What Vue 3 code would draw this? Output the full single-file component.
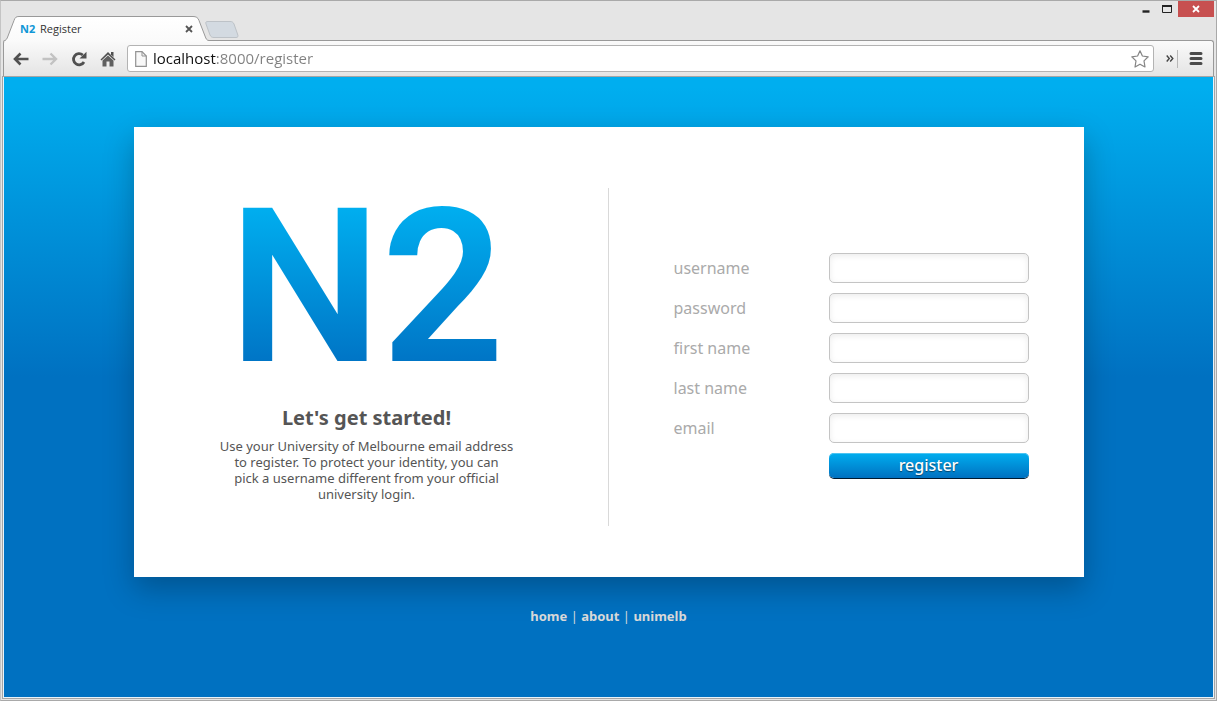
<script setup>
import { ref, reactive } from 'vue'

const address = ref('localhost:8000/register')
const fields = [
  { id: 'username', label: 'username', type: 'text' },
  { id: 'password', label: 'password', type: 'password' },
  { id: 'first-name', label: 'first name', type: 'text' },
  { id: 'last-name', label: 'last name', type: 'text' },
  { id: 'email', label: 'email', type: 'email' }
]
const values = reactive({})
</script>

<template>
  <div class="window">
    <header class="tabstrip">
      <div class="tab">
        <svg class="tab-shape" width="206" height="26" viewBox="0 0 206 26" aria-hidden="true">
          <defs>
            <linearGradient id="tabFill" x1="0" y1="0" x2="0" y2="1">
              <stop offset="0" stop-color="#ffffff" />
              <stop offset="1" stop-color="#fafafa" />
            </linearGradient>
          </defs>
          <path d="M0 26V25.500C3 24.500 4 23 5 20L11 4.500C12 1.500 13 .5 16 .5H190C193 .5 195 1.500 196 4.500L202 20C203 23 204 24.500 206 24.500V26Z" fill="url(#tabFill)" />
          <path d="M0 25.500C3 24.500 4 23 5 20L11 4.500C12 1.500 13 .5 16 .5H190C193 .5 195 1.500 196 4.500L202 20C203 23 204 24.500 206 24.500" fill="none" stroke="#999" />
        </svg>
        <span class="favicon">N2</span>
        <span class="tab-title">Register</span>
        <button class="tab-close" aria-label="Close tab">
          <svg width="8" height="8" viewBox="0 0 8 8"><path d="M1 1L7 7M7 1L1 7" stroke="#555" stroke-width="1.800" /></svg>
        </button>
      </div>
      <button class="new-tab" aria-label="New tab">
        <svg width="34" height="18" viewBox="0 0 34 18"><path d="M3 .5H25C27 .5 28 1 29 3L32.500 13C33.500 15.500 33 16.500 31 16.500H9C7 16.500 6 16 5 14L1 3C.3 1 1 .5 3 .5Z" fill="#d3dae1" stroke="#bdc2c7" /></svg>
      </button>
      <div class="window-buttons">
        <button class="win" aria-label="Minimise"><svg width="8" height="7" viewBox="0 0 8 7"><path d="M.5 5.500H7.500" stroke="#222" stroke-width="2.400" /></svg></button>
        <button class="win" aria-label="Maximise"><svg width="10" height="8" viewBox="0 0 10 8"><path d="M.5 1V7.500H9.500V1" fill="none" stroke="#222" /><path d="M0 1H10" stroke="#222" stroke-width="2" /></svg></button>
        <button class="win win-close" aria-label="Close"><svg width="8" height="8" viewBox="0 0 8 8"><path d="M1 1L7 7M7 1L1 7" stroke="#fff" stroke-width="1.800" /></svg></button>
      </div>
    </header>

    <nav class="toolbar" aria-label="Browser toolbar">
      <button class="tool" aria-label="Back">
        <svg width="16" height="14" viewBox="0 0 16 14"><path d="M15.500 7H2.500M7.500 1.500L2 7L7.500 12.500" fill="none" stroke="#505050" stroke-width="2.600" /></svg>
      </button>
      <button class="tool" aria-label="Forward">
        <svg width="16" height="14" viewBox="0 0 16 14"><path d="M.5 7H13.500M8.500 1.500L14 7L8.500 12.500" fill="none" stroke="#c2c2c2" stroke-width="2.400" /></svg>
      </button>
      <button class="tool" aria-label="Reload">
        <svg width="16" height="16" viewBox="0 0 16 16"><path d="M13 11A5.600 5.600 0 1 1 11.800 4" fill="none" stroke="#505050" stroke-width="2.800" /><path d="M15.500 .8V7.500H8.500Z" fill="#505050" /></svg>
      </button>
      <button class="tool" aria-label="Home">
        <svg width="16" height="16" viewBox="0 0 16 16"><path d="M8 1L15.500 8.500L14.500 9.500L8 3.500L1.500 9.500L.5 8.500Z" fill="#505050" /><path d="M11 1H13.500V6L11 3.500Z" fill="#505050" /><path d="M8 4.500L13.500 9.500V15.500H9.500V10.500H6.500V15.500H2.500V9.500Z" fill="#606060" /></svg>
      </button>
      <div class="omnibox">
        <svg width="12" height="16" viewBox="0 0 12 16" aria-hidden="true"><path d="M.7 .7H7L11.300 5V15.300H.7Z" fill="#f8f8f8" stroke="#929292" stroke-width="1.200" /><path d="M7 .7V5H11.300" fill="none" stroke="#929292" /></svg>
        <input v-model="address" class="address" type="text" aria-label="Address" />
        <button class="star" aria-label="Bookmark this page">
          <svg width="18" height="18" viewBox="0 0 18 18"><path d="M9 .8L11.400 6L17.200 6.800L13 10.900L14 17L9 14.200L4 17L5 10.900L.8 6.800L6.600 6Z" fill="#fff" stroke="#858585" stroke-width="1.200" stroke-linejoin="round" /></svg>
        </button>
      </div>
      <button class="more" aria-label="More extensions">
        <svg width="8" height="7" viewBox="0 0 8 7"><path d="M.7 .5L3.300 3.500L.7 6.500M4.200 .5L6.800 3.500L4.200 6.500" fill="none" stroke="#444" stroke-width="1.400" /></svg>
      </button>
      <button class="menu" aria-label="Menu">
        <svg width="14" height="13" viewBox="0 0 14 13"><path d="M2 1.500H12M2 6.500H12M2 11.500H12" stroke="#4b4b4b" stroke-width="3" stroke-linecap="round" /></svg>
      </button>
    </nav>

    <div class="page">
      <main class="card">
        <section class="intro">
          <h1 class="logo">N2</h1>
          <h2>Let's get started!</h2>
          <p>Use your University of Melbourne email address to register. To protect your identity, you can pick&nbsp;a username different from your official university login.</p>
        </section>
        <form class="form" @submit.prevent>
          <div v-for="f in fields" :key="f.id" class="row">
            <label :for="f.id">{{ f.label }}</label>
            <input :id="f.id" v-model="values[f.id]" :type="f.type" />
          </div>
          <button class="register" type="submit">register</button>
        </form>
      </main>
      <footer class="links">
        <a href="#home">home</a> | <a href="#about">about</a> | <a href="#unimelb">unimelb</a>
      </footer>
    </div>
  </div>
</template>

<style>
body {
  margin: 0;
}
</style>

<style scoped>
* {
  box-sizing: border-box;
}

button {
  margin: 0;
  padding: 0;
  border: 0;
  background: none;
  display: flex;
  align-items: center;
  justify-content: center;
}

.window {
  min-height: 100vh;
  display: flex;
  flex-direction: column;
  padding: 0 2px 2px;
  background: #e5e5e5;
  border: 1px solid #a9a9a9;
  border-left-color: #c4c4c4;
  font-family: "Open Sans", "Noto Sans", sans-serif;
}

.tabstrip {
  display: flex;
  height: 39px;
}

.tab {
  position: relative;
  display: flex;
  align-items: center;
  width: 206px;
  height: 26px;
  margin-top: 15px;
  padding: 0 14px 0 17px;
  z-index: 1;
}

.tab-shape {
  position: absolute;
  left: 0;
  top: 0;
}

.favicon,
.tab-title,
.tab-close {
  position: relative;
}

.favicon {
  width: 20px;
  font: 700 11px/16px "Noto Sans", sans-serif;
  color: #1197d6;
}

.tab-title {
  flex: 1;
  font-size: 11px;
  line-height: 16px;
  color: #333;
}

.tab-close {
  width: 12px;
  height: 16px;
}

.new-tab {
  width: 34px;
  height: 18px;
  margin: 20px 0 0 -4px;
}

.window-buttons {
  display: flex;
  align-items: flex-start;
  margin-left: auto;
}

.win {
  width: 21px;
  height: 16px;
}

.win-close {
  width: 36px;
  margin-left: 1px;
  background: #c75050;
}

.toolbar {
  display: flex;
  align-items: center;
  height: 37px;
  padding: 0 10px 0 7px;
  background: linear-gradient(#fafafa, #e4e4e4);
  border: 1px solid #999;
  border-bottom-color: #a5a5a5;
  border-radius: 3px 3px 0 0;
}

.tool {
  width: 20px;
  height: 24px;
  margin-right: 9px;
}

.omnibox {
  flex: 1;
  display: flex;
  align-items: center;
  height: 27px;
  padding: 0 4px 0 7px;
  background: #fff;
  border: 1px solid #b3b3b3;
  border-radius: 3px;
}

.address {
  flex: 1;
  min-width: 0;
  height: 24px;
  margin-left: 6px;
  padding: 0 0 2px;
  border: 0;
  outline: 0;
  font: 15px/22px "Open Sans", sans-serif;
  color: transparent;
  background: linear-gradient(90deg, #111 63px, #808080 63px);
  -webkit-background-clip: text;
  background-clip: text;
}

.star {
  width: 18px;
  height: 20px;
}

.more {
  flex: none;
  width: 20px;
  height: 18px;
  margin-left: 4px;
  padding-left: 4px;
  border-right: 1px solid #b8b8b8;
}

.menu {
  width: 14px;
  height: 20px;
  margin-left: 11px;
}

.page {
  flex: 1;
  display: flex;
  flex-direction: column;
  align-items: center;
  padding: 50px 20px 20px;
  background: linear-gradient(#00aeef, #00aeef 10px, #0071c1 300px);
  border: 1px solid #e8f3fa;
  border-top: 0;
  outline: 1px solid #a5a5a5;
  font-family: "Noto Sans", sans-serif;
}

.card {
  display: grid;
  grid-template-columns: repeat(2, minmax(0, 1fr));
  align-items: center;
  width: 100%;
  max-width: 950px;
  min-height: 450px;
  padding-top: 10px;
  background: #fff;
  box-shadow: 0 12px 28px rgba(0, 0, 0, 0.25);
}

.intro {
  display: flex;
  flex-direction: column;
  align-items: center;
  min-height: 338px;
  padding-right: 8px;
  border-right: 1px solid #d9d9d9;
  text-align: center;
  color: #555;
}

.logo {
  margin: 0;
  font: 600 216px/200px "Roboto", sans-serif;
  color: transparent;
  background: linear-gradient(#00aeef 20px, #0074c5 176px);
  -webkit-background-clip: text;
  background-clip: text;
}

h2 {
  margin: 16px 0 6px;
  font-size: 20px;
  line-height: 28px;
}

p {
  width: 298px;
  margin: 0;
  font-size: 13px;
  line-height: 16px;
}

.form {
  display: flex;
  flex-direction: column;
  gap: 10px;
  padding: 16px 55px 0 65px;
}

.row {
  display: flex;
  align-items: center;
  justify-content: space-between;
}

.row label {
  font-size: 16px;
  line-height: 24px;
  color: #aaa;
}

.row input {
  width: 200px;
  height: 30px;
  padding: 0 8px;
  border: 1px solid #c4c4c4;
  border-radius: 5px;
  outline: 0;
  background: #fff;
  box-shadow: inset 0 2px 6px rgba(0, 0, 0, 0.08);
  font: 16px "Noto Sans", sans-serif;
}

.register {
  align-self: flex-end;
  width: 200px;
  height: 25px;
  border-radius: 5px;
  background: linear-gradient(#00aeef, #0071c1);
  box-shadow: 0 1px 0 #001a30, inset 0 1px 0 #4cc4f2;
  color: #fff;
  font: 500 16px/24px "Noto Sans", sans-serif;
  text-shadow: 0 1px 1px rgba(0, 0, 0, 0.5);
}

.links {
  margin-top: 29px;
  font-size: 13px;
  line-height: 20px;
  color: #d8d8d8;
}

.links a {
  font-weight: 700;
  color: #d8d8d8;
  text-decoration: none;
}
</style>
